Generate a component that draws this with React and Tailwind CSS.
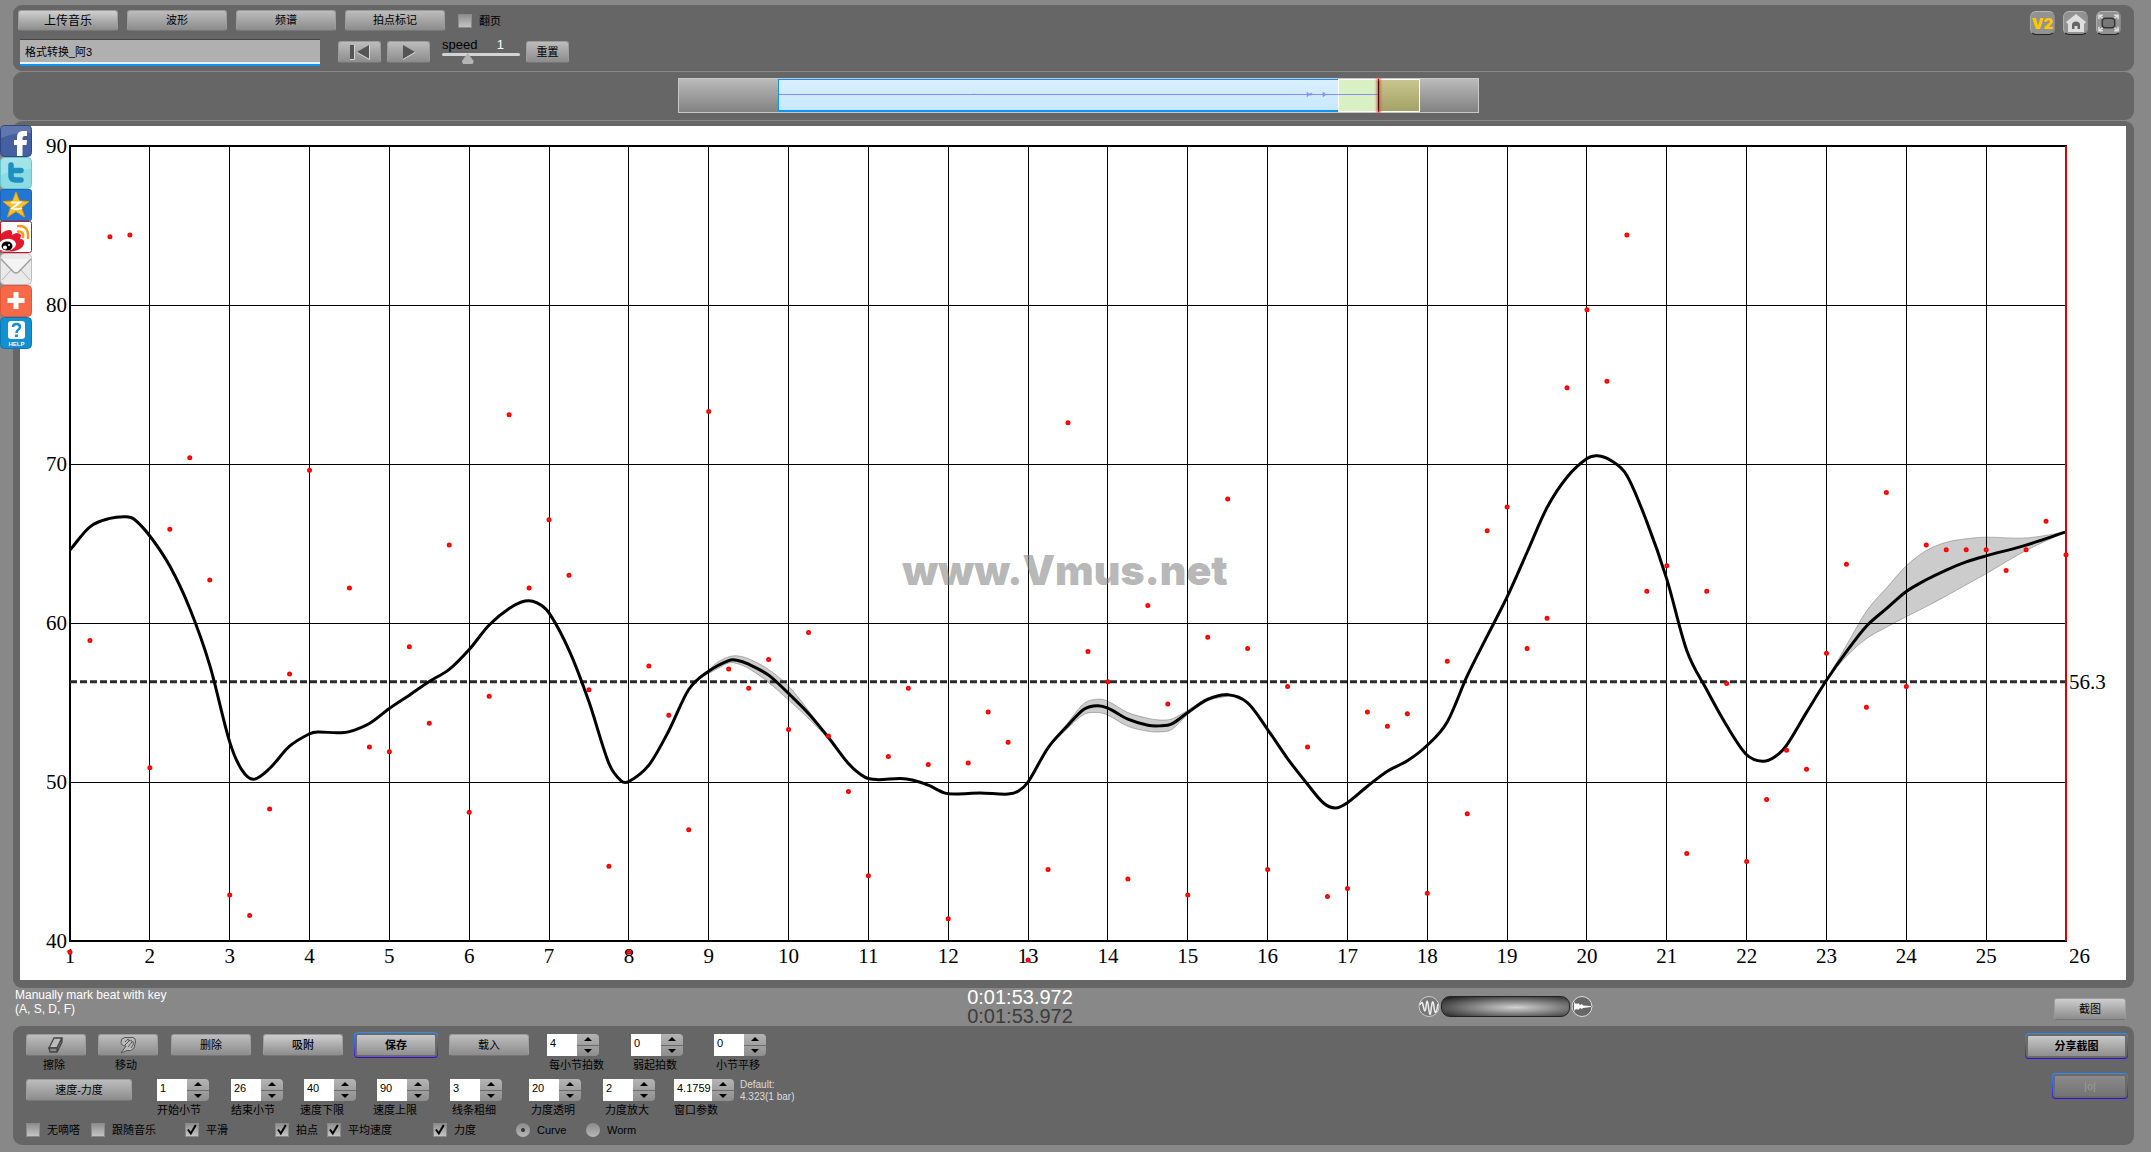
import React, { useState } from 'react';

// one tempo value per quarter bar, starting at bar 1
const beats = [
  39.3, 58.9, 84.3, 84.4, 50.9, 65.9, 70.4, 62.7, 42.9, 41.6, 48.3, 56.8,
  69.6, null, 62.2, 52.2, 51.9, 58.5, 53.7, 64.9, 48.1, 55.4, 73.1, 62.2,
  66.5, 63.0, 55.8, 44.7, 39.3, 57.3, 54.2, 47.0, 73.3, 57.1, 55.9, 57.7,
  53.3, 59.4, 52.9, 49.4, 44.1, 51.6, 55.9, 51.1, 41.4, 51.2, 54.4, 52.5,
  38.8, 44.5, 72.6, 58.2, 56.3, 43.9, 61.1, 54.9, 42.9, 59.1, 67.8, 58.4,
  44.5, 56.0, 52.2, 42.8, 43.3, 54.4, 53.5, 54.3, 43.0, 57.6, 48.0, 65.8,
  67.3, 58.4, 60.3, 74.8, 79.7, 75.2, 84.4, 62.0, 63.6, 45.5, 62.0, 56.2,
  45.0, 48.9, 52.0, 50.8, 58.1, 63.7, 54.7, 68.2, 56.0, 64.9, 64.6, 64.6,
  64.6, 63.3, 64.6, 66.4, 64.3,
];

// smoothed tempo curve, [bar, bpm]
const curve = [
  [1, 64.59], [1.25, 66.05], [1.5, 66.58], [1.7, 66.68], [1.8, 66.54], [2, 65.47], [2.25, 63.58],
  [2.5, 60.91], [2.75, 57.35], [3, 52.52], [3.15, 50.78], [3.3, 50.17], [3.5, 50.85], [3.75, 52.25],
  [4, 53.03], [4.1, 53.15], [4.35, 53.09], [4.5, 53.17], [4.75, 53.68], [5, 54.62], [5.25, 55.46],
  [5.5, 56.32], [5.75, 57.08], [6, 58.33], [6.25, 59.87], [6.5, 60.91], [6.7, 61.38], [6.85, 61.27],
  [7, 60.64], [7.25, 58.29], [7.5, 55.04], [7.75, 51.16], [7.9, 50.09], [8, 50.03], [8.25, 51.06],
  [8.5, 53.22], [8.75, 55.82], [9, 56.97], [9.25, 57.64], [9.35, 57.66], [9.5, 57.41], [9.75, 56.72],
  [10, 55.57], [10.25, 54.31], [10.5, 52.8], [10.75, 51.16], [10.95, 50.32], [11.1, 50.15],
  [11.4, 50.22], [11.55, 50.13], [11.75, 49.8], [11.95, 49.32], [12.1, 49.25], [12.4, 49.31],
  [12.75, 49.24], [12.88, 49.43], [13, 50], [13.25, 52.15], [13.5, 53.57], [13.7, 54.58],
  [13.87, 54.8], [14, 54.64], [14.25, 53.95], [14.5, 53.57], [14.65, 53.53], [14.8, 53.66],
  [15, 54.37], [15.25, 55.19], [15.5, 55.48], [15.75, 54.98], [16, 53.3], [16.25, 51.47],
  [16.5, 49.86], [16.7, 48.68], [16.85, 48.37], [17, 48.7], [17.25, 49.73], [17.5, 50.68],
  [17.75, 51.33], [18, 52.31], [18.25, 53.78], [18.5, 56.67], [18.75, 59.17], [19, 61.64],
  [19.25, 64.45], [19.5, 67.26], [19.75, 69.17], [20, 70.34], [20.13, 70.52], [20.3, 70.22],
  [20.5, 69.28], [20.75, 66.36], [21, 62.76], [21.25, 58.27], [21.5, 55.8], [21.75, 53.55],
  [22, 51.71], [22.2, 51.3], [22.35, 51.57], [22.5, 52.31], [22.75, 54.38], [23, 56.4],
  [23.25, 58.2], [23.5, 59.8], [23.75, 60.9], [24, 61.98], [24.25, 62.72], [24.5, 63.33],
  [24.75, 63.84], [25, 64.22], [25.5, 64.9], [26, 65.73],
];

// dynamics shading, [bar, upper, lower]
const bands = [
  [
    [8.95, 56.8, 56.7], [9.1, 57.5, 57.1], [9.25, 57.87, 57.48], [9.35, 57.94, 57.45], [9.5, 57.75, 57.14],
    [9.75, 57.08, 56.26], [10, 56.03, 55.15], [10.25, 54.5, 54], [10.5, 52.8, 52.7],
  ],
  [
    [13.3, 52.5, 52.4], [13.5, 53.74, 53.4], [13.7, 54.94, 54.25], [13.87, 55.21, 54.37], [14, 55.08, 54.2],
    [14.25, 54.37, 53.5], [14.5, 54.01, 53.19], [14.65, 53.9, 53.15], [14.8, 53.97, 53.3],
    [15, 54.52, 54.24], [15.25, 55.3, 55.1], [15.5, 55.6, 55.4],
  ],
  [
    [23, 56.4, 56.4], [23.25, 58.6, 57.9], [23.5, 60.74, 59.01], [23.75, 62.2, 59.73], [24, 63.6, 60.4],
    [24.25, 64.56, 61.03], [24.5, 65.08, 61.7], [24.75, 65.3, 62.4], [25, 65.4, 63.1],
    [25.5, 65.35, 64.56], [26, 65.73, 65.73],
  ],
];

const AVERAGE = 56.3;
const xOf = (bar) => 50 + ((bar - 1) * 1996) / 25;
const yOf = (bpm) => 815 - ((bpm - 40) * 795) / 50;
const bars = Array.from({ length: 26 }, (_, i) => i + 1);
const levels = [40, 50, 60, 70, 80, 90];

function smoothPath(points, start = 'M') {
  const p = points.map(([bar, bpm]) => [xOf(bar), yOf(bpm)]);
  const slope = p.map((_, i) => {
    const a = p[Math.max(i - 1, 0)];
    const b = p[Math.min(i + 1, p.length - 1)];
    return (b[1] - a[1]) / (b[0] - a[0]);
  });
  let d = `${start}${p[0][0]},${p[0][1]}`;
  for (let i = 1; i < p.length; i++) {
    const h = (p[i][0] - p[i - 1][0]) / 3;
    d += `C${p[i - 1][0] + h},${p[i - 1][1] + slope[i - 1] * h} ${p[i][0] - h},${p[i][1] - slope[i] * h} ${p[i][0]},${p[i][1]}`;
  }
  return d;
}

function bandPath(band) {
  const upper = band.map(([bar, top]) => [bar, top]);
  const lower = band.map(([bar, , low]) => [bar, low]).reverse();
  return `${smoothPath(upper)}${smoothPath(lower, 'L')}Z`;
}

function TempoChart() {
  return (
    <svg viewBox="0 0 2106 854" className="block w-full h-auto bg-white" role="img" aria-label="Tempo chart">
      <g stroke="#000" strokeWidth="1" shapeRendering="crispEdges">
        {bars.map((bar) => (
          <line key={bar} x1={xOf(bar)} x2={xOf(bar)} y1="20" y2="815" />
        ))}
        {levels.map((level) => (
          <line key={level} x1="50" x2="2046" y1={yOf(level)} y2={yOf(level)} />
        ))}
      </g>
      <rect x="50" y="20" width="1996" height="795" fill="none" stroke="#000" strokeWidth="2" />

      <g fontFamily="'Liberation Serif', serif" fontSize="21" fill="#000">
        {levels.map((level) => (
          <text key={level} x="47" y={yOf(level) + 7} textAnchor="end">{level}</text>
        ))}
        {bars.slice(0, 25).map((bar) => (
          <text key={bar} x={xOf(bar)} y="837" textAnchor="middle">{bar}</text>
        ))}
        <text x="2049" y="837">26</text>
        <text x="2049" y={yOf(AVERAGE) + 7}>{AVERAGE}</text>
      </g>

      <text x="1045" y="459" textAnchor="middle" fontFamily="Inter, sans-serif" fontWeight="900" fontSize="41" fill="#888" fillOpacity="0.62">
        www.Vmus.net
      </text>

      {bands.map((band, i) => (
        <path key={i} d={bandPath(band)} fill="#000" fillOpacity="0.2" stroke="#000" strokeOpacity="0.25" />
      ))}
      <line x1="50" x2="2046" y1={yOf(AVERAGE)} y2={yOf(AVERAGE)} stroke="#2a2a2a" strokeWidth="3" strokeDasharray="7 3" />
      <path d={smoothPath(curve)} fill="none" stroke="#000" strokeWidth="3" strokeLinejoin="round" />

      <line x1="2046" x2="2046" y1="20" y2="815" stroke="#e00000" strokeWidth="2" />
      {beats.map((bpm, i) => (
        bpm !== null && <circle key={i} cx={xOf(1 + i / 4)} cy={yOf(bpm)} r="1.5" fill="#f66" stroke="#f00" strokeWidth="2" />
      ))}
    </svg>
  );
}

function Button({ className = 'w-20 h-[21px] text-[11px]', children, ...rest }) {
  return (
    <button
      type="button"
      className={`shrink-0 flex items-center justify-center rounded-[3px] border border-[#9c9c9c] border-b-[#777] bg-linear-to-b from-[#bdbdbd] to-[#8c8c8c] whitespace-nowrap text-black ${className}`}
      {...rest}
    >
      {children}
    </button>
  );
}

function GlowButton({ className, children, ...rest }) {
  return (
    <button
      type="button"
      className={`shrink-0 rounded-[4px] bg-linear-to-b from-[#2b8cff] to-[#3a00d8] p-px text-[11px] font-bold text-black disabled:text-[#9a9a9a] ${className}`}
      {...rest}
    >
      <span className="flex h-full items-center justify-center rounded-[3px] border-2 border-[#6a6a6a] bg-linear-to-b from-[#c8c8c8] to-[#8f8f8f] in-disabled:from-[#8a8a8a] in-disabled:to-[#747474]">
        {children}
      </span>
    </button>
  );
}

function Spinner({ id, label, value, className = '', inputWidth = 'w-[30px]', labelShift = '' }) {
  const [current, setCurrent] = useState(value);
  const step = (delta) => setCurrent((v) => String(Number(v) + delta));

  return (
    <div className={`shrink-0 ${className}`}>
      <div className="flex h-[22px]">
        <input
          id={id}
          value={current}
          onChange={(e) => setCurrent(e.target.value)}
          className={`bg-white pl-[3px] pb-1 text-[11px] text-black outline-none ${inputWidth}`}
        />
        <div className="flex w-[22px] flex-col divide-y divide-[#6c6c6c] overflow-hidden rounded-r-[4px] bg-linear-to-b from-[#b4b4b4] to-[#8e8e8e]">
          <button type="button" aria-label={`${label} +`} onClick={() => step(1)} className="flex flex-1 items-center justify-center">
            <svg width="8" height="4" viewBox="0 0 8 4"><path d="M0 4L4 0L8 4Z" /></svg>
          </button>
          <button type="button" aria-label={`${label} -`} onClick={() => step(-1)} className="flex flex-1 items-center justify-center">
            <svg width="8" height="4" viewBox="0 0 8 4"><path d="M0 0L4 4L8 0Z" /></svg>
          </button>
        </div>
      </div>
      <label htmlFor={id} className={`mt-px block h-4 w-0 text-[11px] leading-4 whitespace-nowrap ${labelShift}`}>
        {label}
      </label>
    </div>
  );
}

function CheckBox({ id, label, checked = false, className = '' }) {
  return (
    <div className={`flex shrink-0 items-center ${className}`}>
      <span className="relative block h-[14px] w-[14px]">
        <input
          id={id}
          type="checkbox"
          defaultChecked={checked}
          className="peer block h-[14px] w-[14px] appearance-none border border-[#8a8a8a] bg-linear-to-b from-[#8f8f8f] to-[#c4c4c4]"
        />
        <svg className="pointer-events-none absolute top-0 left-0 hidden peer-checked:block" width="14" height="14" viewBox="0 0 14 14" fill="none" stroke="#000" strokeWidth="2">
          <path d="M3 6.5L5.8 10.5L10.8 2" />
        </svg>
      </span>
      <label htmlFor={id} className="ml-[7px] text-[11px] leading-[14px] whitespace-nowrap">{label}</label>
    </div>
  );
}

function Radio({ id, label, checked = false, className = '' }) {
  return (
    <div className={`flex shrink-0 items-center ${className}`}>
      <span className="relative block h-[14px] w-[14px]">
        <input
          id={id}
          type="radio"
          name="display"
          defaultChecked={checked}
          className="peer block h-[14px] w-[14px] appearance-none rounded-full bg-linear-to-b from-[#8a8a8a] to-[#b8b8b8]"
        />
        <span className="pointer-events-none absolute top-[5px] left-[5px] hidden h-1 w-1 rounded-full bg-[#333] peer-checked:block" />
      </span>
      <label htmlFor={id} className="ml-[7px] text-[11px] leading-[14px]">{label}</label>
    </div>
  );
}

const shareLinks = [
  {
    name: 'Facebook',
    icon: (
      <>
        <rect x="0.5" y="0.5" width="31" height="31" rx="4" fill="#4560a0" stroke="#2d4686" />
        <path d="M1 4Q1 1 4 1H28Q31 1 31 4V8Q16 7 1 13Z" fill="#fff" opacity="0.15" />
        <path d="M17 31V20H14V15H17V12Q17 6 23 6H27V11H24.5Q22.500 11 22.500 13V15H27L26.500 20H22.500V31Z" fill="#fff" />
      </>
    ),
  },
  {
    name: 'Twitter',
    icon: (
      <>
        <rect x="0.5" y="0.5" width="31" height="31" rx="4" fill="#8bdce3" stroke="#6cc4cf" />
        <path d="M1 4Q1 1 4 1H28Q31 1 31 4V12Q16 11 1 18Z" fill="#fff" opacity="0.2" />
        <path d="M11 8V19Q11 23 16 23H21M11 13.500H21" fill="none" stroke="#1d8fc1" strokeWidth="5.500" strokeLinecap="round" />
      </>
    ),
  },
  {
    name: 'Qzone',
    icon: (
      <>
        <rect x="0.5" y="0.5" width="31" height="31" rx="2" fill="#2277d2" stroke="#1c64b8" />
        <path d="M16 3L19.500 12L29 12.500L21.500 18.500L24.500 28L16 22.500L7.500 28L10.500 18.500L3 12.500L12.500 12Z" fill="#fbc02a" stroke="#e89a0c" />
        <path d="M11 13.500H20L12 19.500Q17 21 22 19" fill="none" stroke="#fff" strokeWidth="1.800" />
      </>
    ),
  },
  {
    name: 'Weibo',
    icon: (
      <>
        <rect x="0.5" y="0.5" width="31" height="31" rx="2" fill="#fff" stroke="#c8171e" />
        <path d="M1 13Q5 9 10 9Q13 10 12 14Q18 10 21 14Q21 16 20 18Q25 18 24 23Q22 29 12 30.500H1Z" fill="#e6162d" />
        <ellipse cx="7" cy="24" rx="9" ry="6" fill="#fff" transform="rotate(-10 7 24)" />
        <ellipse cx="7" cy="25" rx="5.500" ry="4.500" fill="#000" />
        <circle cx="5" cy="26.500" r="2" fill="#fff" />
        <circle cx="9" cy="24" r="1" fill="#fff" />
        <path d="M18 5Q29 4 28 17M18 10.500Q24 10 23 16" fill="none" stroke="#f39a1f" strokeWidth="2.600" strokeLinecap="round" />
      </>
    ),
  },
  {
    name: 'Mail',
    icon: (
      <>
        <rect x="0.5" y="0.5" width="31" height="31" rx="4" fill="#e9e9e9" stroke="#bdbdbd" />
        <path d="M2 27L12 16M30 27L20 16" fill="none" stroke="#b5b5b5" />
        <path d="M1 6L13.500 19Q16 21 18.500 19L31 6" fill="#f4f4f4" stroke="#a0a0a0" strokeWidth="1.500" />
      </>
    ),
  },
  {
    name: 'More',
    icon: (
      <>
        <rect x="0.5" y="0.5" width="31" height="31" rx="4" fill="#f8694a" stroke="#df5636" />
        <path d="M16 7V24M7.500 15.500H24.500" stroke="#fff" strokeWidth="5" />
      </>
    ),
  },
  {
    name: 'Help',
    icon: (
      <>
        <rect x="0.5" y="0.5" width="31" height="31" rx="4" fill="#1290cf" stroke="#0b78b4" />
        <rect x="8" y="4" width="17" height="18" rx="3" fill="#fff" />
        <path d="M13 10Q13 7 16.500 7Q20 7 20 10Q20 12 18 13Q16.500 14 16.500 16" fill="none" stroke="#1290cf" strokeWidth="2.500" />
        <rect x="15" y="17.500" width="3" height="2.500" fill="#1290cf" />
        <text x="16.500" y="29" textAnchor="middle" fontFamily="'Liberation Sans', sans-serif" fontWeight="700" fontSize="6" fill="#fff">HELP</text>
      </>
    ),
  },
];

function ShareBar() {
  return (
    <nav className="absolute top-[125px] left-0 flex flex-col">
      {shareLinks.map((link) => (
        <a key={link.name} href="#" aria-label={link.name} className="block h-8">
          <svg width="32" height="32" viewBox="0 0 32 32">{link.icon}</svg>
        </a>
      ))}
    </nav>
  );
}

function CornerButton({ label, children }) {
  return (
    <button
      type="button"
      aria-label={label}
      className="flex h-6 w-[25px] items-center justify-center overflow-hidden rounded-[6px] border border-t-[#b5b5b5] border-r-[#888] border-b-[#222] border-l-[#aaa] bg-[#929292]"
    >
      {children}
    </button>
  );
}

function TopPanel() {
  return (
    <header className="flex justify-between rounded-[9px] bg-[#666] pt-[5px] pr-[13px] pb-[5px] pl-[5px]">
      <div>
        <div className="flex items-center gap-[9px]">
          <Button className="h-[21px] w-[100px] text-[12px] from-[#d0d0d0]">上传音乐</Button>
          <Button className="h-[21px] w-[100px] text-[11px]">波形</Button>
          <Button className="h-[21px] w-[100px] text-[11px]">频谱</Button>
          <Button className="h-[21px] w-[100px] text-[11px]">拍点标记</Button>
          <CheckBox id="flip" label="翻页" className="ml-1" />
        </div>
        <div className="mt-2 flex">
          <input
            aria-label="文件名"
            defaultValue="格式转换_阿3"
            className="ml-[2px] h-[27px] w-[300px] border-t border-b-2 border-t-[#444] border-b-[#0e94f0] bg-[#b0b0b0] px-[5px] pb-[3px] text-[11px] text-black shadow-[inset_0_-2px_0_#e8f4fc] outline-none"
          />
          <Button className="mt-[2px] ml-[18px] h-[22px] w-[43px]" aria-label="回到开头">
            <svg width="21" height="16" viewBox="0 0 21 16">
              <path d="M1 1H5V15H1ZM20 1V15L8 8Z" fill="#555" />
              <path d="M5.500 1V15.500H1M8 8.500L20.500 15.500V1" fill="none" stroke="#d5d5d5" />
            </svg>
          </Button>
          <Button className="mt-[2px] ml-[6px] h-[22px] w-[43px]" aria-label="播放">
            <svg width="14" height="16" viewBox="0 0 14 16">
              <path d="M1 1V15L13 8Z" fill="#555" />
              <path d="M1 15.500L13.500 8" fill="none" stroke="#d5d5d5" />
            </svg>
          </Button>
          <div className="ml-3 w-[78px]">
            <div className="flex h-[14px] justify-between pr-4 text-[13px] leading-[11px]">
              <label htmlFor="speed">speed</label>
              <output htmlFor="speed" className="text-white">1</output>
            </div>
            <input
              id="speed"
              type="range"
              defaultValue="30"
              className="block h-[3px] w-full appearance-none rounded bg-[#d4d4d4] [&::-webkit-slider-thumb]:mt-[8px] [&::-webkit-slider-thumb]:h-[11px] [&::-webkit-slider-thumb]:w-[12px] [&::-webkit-slider-thumb]:appearance-none [&::-webkit-slider-thumb]:bg-[#b4b4b4] [&::-webkit-slider-thumb]:[clip-path:polygon(50%_0,100%_75%,90%_100%,10%_100%,0_75%)]"
            />
          </div>
          <Button className="mt-[2px] ml-[6px] h-[22px] w-[43px] text-[11px]">重置</Button>
        </div>
      </div>

      <div className="flex gap-2 pt-px">
        <CornerButton label="V2">
          <span className="font-[Inter,sans-serif] text-[15px] leading-none font-black text-[#ffc800]">V2</span>
        </CornerButton>
        <CornerButton label="Home">
          <svg width="22" height="20" viewBox="0 0 22 20">
            <path d="M11 1L21 9L19 11V19H3V11L1 9Z" fill="#dedede" />
            <path d="M7 16V12Q7 8.500 11 8.500Q15 8.500 15 12V16H12.500V13H9.500V16Z" fill="#666" />
          </svg>
        </CornerButton>
        <CornerButton label="Full screen">
          <svg width="24" height="20" viewBox="0 0 24 20" fill="none">
            <rect x="5.500" y="5" width="13" height="10" rx="3" fill="#777" stroke="#333" strokeWidth="1.500" />
            <path d="M2 6V2H6M2 2L6 5M18 2H22V6M22 2L18 5M2 14V18H6M2 18L6 15M22 14V18H18M22 18L18 15" stroke="#e0e0e0" strokeWidth="1.500" />
          </svg>
        </CornerButton>
      </div>
    </header>
  );
}

function Overview() {
  return (
    <section className="mt-px flex h-12 items-start justify-center rounded-[9px] bg-[#666] pt-[6px] pl-[10px]">
      <div className="relative flex h-[35px] w-[801px] border border-[#c8c8c8] bg-linear-to-b from-[#bbb] to-[#828282]">
        <div className="ml-[99px] w-[560px] border border-r-0 border-b-2 border-[#0e94f0] bg-linear-to-b from-[#d9effd] to-[#c8e8ff]" />
        <div className="w-[41px] border border-r-0 border-white bg-[#d9efc4]" />
        <div className="w-[41px] border border-l-0 border-white bg-linear-to-b from-[#c8c68e] to-[#a5a266]" />
        <svg className="absolute top-0 left-[100px]" width="602" height="33" viewBox="0 0 602 33">
          <path d="M0 15.500H600" stroke="#8490ff" />
          <path d="M195 14V16M528 13V18L530 16L533 16V14L530 15ZM544 13V18L547 15.500Z" fill="#8490ff" stroke="#8490ff" strokeWidth="0.500" />
        </svg>
        <div className="absolute top-0 bottom-0 left-[699px] w-px border-y-2 border-[#e00000] bg-[#401010] shadow-[0_0_3px_1px_#d04030]" />
      </div>
    </section>
  );
}

function StatusRow() {
  return (
    <div className="grid h-[38px] grid-cols-3 text-white">
      <p className="pl-[2px] text-[12px] leading-[14px]">
        Manually mark beat with key<br />(A, S, D, F)
      </p>
      <div className="pr-[107px] text-center text-[20px] leading-[19px]">
        <div>0:01:53.972</div>
        <div className="text-[#3c3c3c]">0:01:53.972</div>
      </div>
      <div className="flex items-start justify-between pr-2">
        <div className="flex items-center gap-px -ml-[9px] pt-[7px]">
          <svg width="22" height="23" viewBox="0 0 22 23" fill="none" stroke="#eee">
            <circle cx="11" cy="11.500" r="10" fill="#777" stroke="#ccc" />
            <path d="M2 10Q4 4 5.500 12T8 12Q9 0 10.500 12T13 16Q14.500 0 16 12T20 9" strokeWidth="1.500" />
          </svg>
          <input
            type="range"
            aria-label="音量"
            className="block h-[21px] w-[129px] appearance-none rounded-[9px] border border-[#222] bg-radial-[at_58%_55%] from-[#d2d2d2] to-[#161616] [&::-webkit-slider-thumb]:appearance-none"
          />
          <svg width="22" height="23" viewBox="0 0 22 23">
            <circle cx="11" cy="11.500" r="10" fill="#666" stroke="#ddd" />
            <path d="M3 6L4 9L5 8L6 9.500L7 8L9 10L11 9L12 10.500L20 11V12L12 13L11 14L9 13L7 15L6 13.500L5 15L4 14L3 17Z" fill="#fff" />
          </svg>
        </div>
        <Button className="mt-[10px] h-[22px] w-[72px] text-[11px] from-[#cecece]">截图</Button>
      </div>
    </div>
  );
}

function ControlPanel() {
  return (
    <section className="flex justify-between rounded-[9px] bg-[#666] pt-[8px] pr-[6px] pb-[8px] pl-[13px]">
      <div>
        <div className="flex items-start">
          <div className="w-[60px] text-center text-[11px]">
            <Button className="h-[22px] w-[60px]" id="erase" aria-label="擦除">
              <svg width="18" height="16" viewBox="0 0 18 16" fill="#bbb" stroke="#444" strokeWidth="1.300">
                <path d="M7 1H15L10 11H2Z" />
                <path d="M2 11L3 15H10L15 5V1L10 11ZM10 11V15" fill="#888" />
              </svg>
            </Button>
            <label htmlFor="erase" className="mt-px block h-4 leading-4 -ml-1">擦除</label>
          </div>
          <div className="ml-3 w-[60px] text-center text-[11px]">
            <Button className="h-[22px] w-[60px]" id="move" aria-label="移动">
              <svg width="18" height="18" viewBox="0 0 18 18" fill="#bbb" stroke="#555">
                <path d="M2 17L7 10Q2 10 2 6Q2 2 6 1.500H14Q17 2 16.500 6L15 12Q12 16 8 14.500Z" />
                <path d="M6 6Q10 1 10 5L6 9M10 5Q13 3 13 6L9 11M13 6Q16 5 14 9L12 12" fill="none" />
              </svg>
            </Button>
            <label htmlFor="move" className="mt-px block h-4 leading-4 -ml-1">移动</label>
          </div>
          <Button className="ml-[13px] h-[22px] w-20 text-[11px]">删除</Button>
          <Button className="ml-3 h-[22px] w-20 text-[11px] font-medium from-[#cecece]">吸附</Button>
          <GlowButton className="-mt-[2px] ml-[11px] h-[26px] w-[84px]">保存</GlowButton>
          <Button className="ml-[11px] h-[22px] w-20 text-[11px]">载入</Button>
          <Spinner id="beats" label="每小节拍数" value="4" className="ml-[18px] w-[52px]" labelShift="ml-[2px]" />
          <Spinner id="pickup" label="弱起拍数" value="0" className="ml-8 w-[52px]" labelShift="ml-[2px]" />
          <Spinner id="shift" label="小节平移" value="0" className="ml-[31px] w-[52px]" labelShift="ml-[2px]" />
        </div>

        <div className="mt-[6px] flex items-start">
          <Button className="h-[22px] w-[106px] text-[11px]">速度-力度</Button>
          <Spinner id="start" label="开始小节" value="1" className="ml-[25px] w-[52px]" />
          <Spinner id="end" label="结束小节" value="26" className="ml-[22px] w-[52px]" />
          <Spinner id="min" label="速度下限" value="40" className="ml-[21px] w-[52px]" labelShift="-ml-1" />
          <Spinner id="max" label="速度上限" value="90" className="ml-[21px] w-[52px]" labelShift="-ml-1" />
          <Spinner id="stroke" label="线条粗细" value="3" className="ml-[21px] w-[52px]" labelShift="ml-[2px]" />
          <Spinner id="alpha" label="力度透明" value="20" className="ml-[27px] w-[52px]" labelShift="ml-[2px]" />
          <Spinner id="gain" label="力度放大" value="2" className="ml-[22px] w-[52px]" labelShift="ml-[2px]" />
          <Spinner id="window" label="窗口参数" value="4.1759" className="ml-[19px] w-[60px]" inputWidth="w-[38px]" />
          <p className="ml-[6px] text-[10px] leading-3 text-[#dcdcdc]">
            Default:<br />4.323(1 bar)
          </p>
        </div>

        <div className="mt-[5px] flex">
          <CheckBox id="mute" label="无嘀嗒" className="w-[65px]" />
          <CheckBox id="follow" label="跟随音乐" className="w-[94px]" />
          <CheckBox id="smooth" label="平滑" checked className="w-[90px]" />
          <CheckBox id="dots" label="拍点" checked className="w-[52px]" />
          <CheckBox id="average" label="平均速度" checked className="w-[106px]" />
          <CheckBox id="dynamics" label="力度" checked className="w-[83px]" />
          <Radio id="curve" label="Curve" checked className="w-[70px]" />
          <Radio id="worm" label="Worm" />
        </div>
      </div>

      <div className="-mt-px flex flex-col items-end gap-[14px]">
        <GlowButton className="h-[26px] w-[103px]">分享截图</GlowButton>
        <GlowButton className="h-[26px] w-[76px]" disabled>
          <span className="font-normal">|o|</span>
        </GlowButton>
      </div>
    </section>
  );
}

export default function App() {
  return (
    <div className="relative min-h-screen bg-[#888] pt-[5px] pr-[17px] pl-[13px] font-['Liberation_Sans','Noto_Sans_CJK_SC',sans-serif] text-black">
      <TopPanel />
      <Overview />
      <main className="mt-px rounded-[9px] bg-[#666] pt-[5px] pr-2 pb-2 pl-[7px]">
        <TempoChart />
      </main>
      <StatusRow />
      <ControlPanel />
      <ShareBar />
    </div>
  );
}
